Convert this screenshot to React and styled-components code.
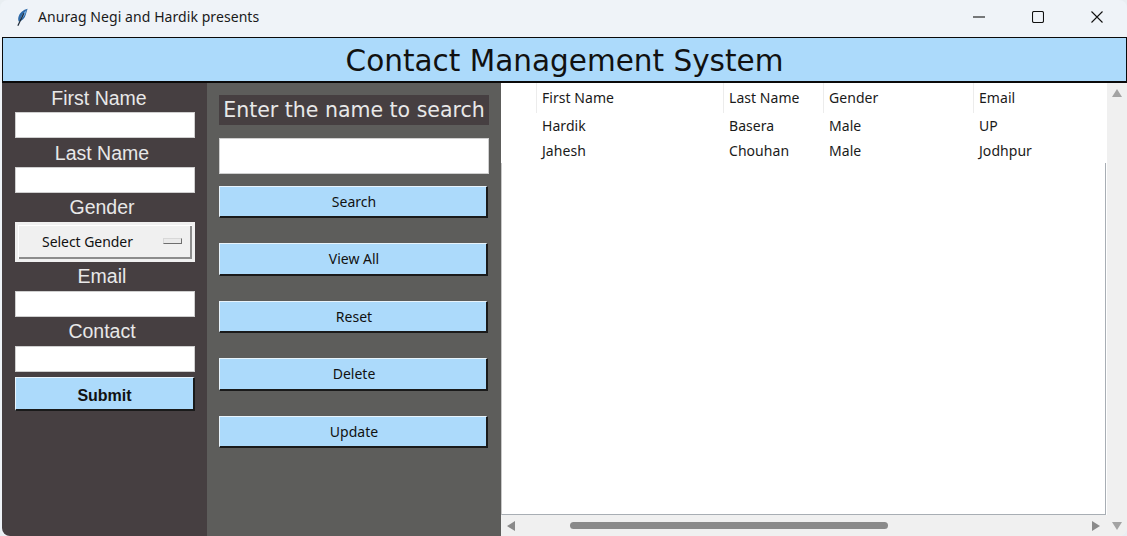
import React from 'react';
import styled, { createGlobalStyle } from 'styled-components';

const GlobalStyle = createGlobalStyle`
  html, body {
    margin: 0;
    padding: 0;
    background: #e9eef2;
    overflow: hidden;
  }
  * {
    box-sizing: border-box;
  }
`;

const COLUMNS = [
  { label: 'First Name', width: 187 },
  { label: 'Last Name', width: 100 },
  { label: 'Gender', width: 150 },
  { label: 'Email', width: 133 },
];

const ROWS = [
  ['Hardik', 'Basera', 'Male', 'UP'],
  ['Jahesh', 'Chouhan', 'Male', 'Jodhpur'],
];

const ACTIONS = ['Search', 'View All', 'Reset', 'Delete', 'Update'];

const Feather = () => (
  <svg width="13" height="19" viewBox="0 0 14 20">
    <path d="M12.500 .5C8 1.500 3.500 5 2.500 10c-.4 2 0 3.500.7 4.500 3.300-.8 6.300-3.800 7.300-7.500.6-2.300 1.300-4.500 2-6.500z" fill="#2f6aa8" />
    <path d="M11.500 2C8.500 4.500 5.500 8 4.500 12.500c2.500-1.500 4.500-4 5.500-6.500.5-1.300 1-2.700 1.500-4z" fill="#7ab2e6" />
    <path d="M8.500 5.500 2 19" stroke="#1c2836" strokeWidth="1.300" fill="none" />
  </svg>
);

const Minimize = () => (
  <svg width="12" height="12" viewBox="0 0 12 12">
    <path d="M0 6h12" stroke="#111" strokeWidth="1.100" />
  </svg>
);

const Maximize = () => (
  <svg width="12" height="12" viewBox="0 0 12 12">
    <rect x=".5" y=".5" width="11" height="11" rx="1.500" fill="none" stroke="#111" strokeWidth="1.100" />
  </svg>
);

const Close = () => (
  <svg width="12" height="12" viewBox="0 0 12 12">
    <path d="M.5.5l11 11M11.500.5l-11 11" stroke="#111" strokeWidth="1.100" />
  </svg>
);

const ARROWS = {
  up: { w: 10, h: 8, points: '5,0 10,8 0,8', fill: '#a3a3a3' },
  down: { w: 10, h: 8, points: '0,0 10,0 5,8', fill: '#a3a3a3' },
  left: { w: 8, h: 10, points: '8,0 8,10 0,5', fill: '#8a8a8a' },
  right: { w: 8, h: 10, points: '0,0 0,10 8,5', fill: '#8a8a8a' },
};

const Arrow = ({ dir }) => {
  const { w, h, points, fill } = ARROWS[dir];
  return (
    <svg width={w} height={h} viewBox={`0 0 ${w} ${h}`}>
      <polygon points={points} fill={fill} />
    </svg>
  );
};

export default function App() {
  return (
    <Page>
      <GlobalStyle />
      <TitleBar>
        <Feather />
        <WindowTitle>Anurag Negi and Hardik presents</WindowTitle>
        <WindowControls>
          <WindowButton><Minimize /></WindowButton>
          <WindowButton><Maximize /></WindowButton>
          <WindowButton><Close /></WindowButton>
        </WindowControls>
      </TitleBar>
      <Banner>Contact Management System</Banner>
      <Main>
        <FormPanel>
          <FieldLabel $shift={12} $low>First Name</FieldLabel>
          <TextBox />
          <FieldLabel $low>Last Name</FieldLabel>
          <TextBox />
          <FieldLabel>Gender</FieldLabel>
          <GenderMenu>
            <span>Select Gender</span>
            <MenuIndicator />
          </GenderMenu>
          <FieldLabel>Email</FieldLabel>
          <TextBox />
          <FieldLabel>Contact</FieldLabel>
          <TextBox />
          <SubmitButton>Submit</SubmitButton>
        </FormPanel>
        <SearchPanel>
          <SearchLabel>Enter the name to search</SearchLabel>
          <SearchBox />
          <ActionList>
            {ACTIONS.map((action) => (
              <ActionButton key={action}>{action}</ActionButton>
            ))}
          </ActionList>
        </SearchPanel>
        <TablePanel>
          <TableArea>
            <TableRow $head>
              <Spacer />
              {COLUMNS.map((column) => (
                <HeadCell key={column.label} $width={column.width}>{column.label}</HeadCell>
              ))}
            </TableRow>
            {ROWS.map((row) => (
              <TableRow key={row[0]}>
                <Spacer />
                {row.map((value, i) => (
                  <Cell key={COLUMNS[i].label} $width={COLUMNS[i].width}>{value}</Cell>
                ))}
              </TableRow>
            ))}
            <TableFrame />
          </TableArea>
          <HorizontalBar>
            <Arrow dir="left" />
            <HorizontalTrack>
              <HorizontalThumb />
            </HorizontalTrack>
            <Arrow dir="right" />
          </HorizontalBar>
        </TablePanel>
        <VerticalBar>
          <Arrow dir="up" />
          <Arrow dir="down" />
        </VerticalBar>
      </Main>
    </Page>
  );
}

const Page = styled.div`
  width: 1127px;
  height: 536px;
  display: flex;
  flex-direction: column;
  overflow: hidden;
  background: #eff3f8;
  border-radius: 8px;
`;

const TitleBar = styled.div`
  height: 37px;
  padding: 0 0 3px 16px;
  display: flex;
  align-items: center;
  flex: none;
`;

const WindowTitle = styled.div`
  margin: 0 0 2px 9px;
  font: 400 14px "Noto Sans", sans-serif;
  letter-spacing: 0.07px;
  color: #1a1a1a;
`;

const WindowControls = styled.div`
  margin-left: auto;
  padding-right: 1px;
  display: flex;
`;

const WindowButton = styled.div`
  width: 59px;
  height: 34px;
  display: flex;
  align-items: center;
  justify-content: center;
`;

const Banner = styled.div`
  flex: none;
  height: 46px;
  margin-left: 2px;
  border: 1px solid #0a0a0a;
  border-bottom-width: 2px;
  background: #acdafb;
  color: #111;
  font: 400 29.500px "DejaVu Sans", sans-serif;
  line-height: 46px;
  text-align: center;
  white-space: nowrap;
`;

const Main = styled.div`
  flex: 1;
  min-height: 0;
  display: flex;
  margin-left: 2px;
`;

const FormPanel = styled.div`
  width: 205px;
  flex: none;
  background: #463f41;
  padding: 0 12px 0 13px;
  border-bottom-left-radius: 8px;
  display: flex;
  flex-direction: column;
`;

const FieldLabel = styled.div`
  height: 29px;
  padding-right: ${({ $shift }) => $shift || 6}px;
  color: #e8e8e8;
  font: 400 19.500px/${({ $low }) => ($low ? 31 : 29)}px "Liberation Sans", sans-serif;
  text-align: center;
`;

const TextBox = styled.div`
  height: 26px;
  background: #fff;
  border: 1px solid #cfcfcf;
`;

const GenderMenu = styled.div`
  height: 40px;
  padding: 0 10px 2px 24px;
  display: flex;
  align-items: center;
  justify-content: space-between;
  background: #f0f0f0;
  border: 3px solid #f0f0f0;
  box-shadow: inset 1px 1px 0 #fff, inset -2px -2px 0 #8c8c8c;
  color: #111;
  font: 400 14px "Noto Sans", sans-serif;
  letter-spacing: -0.05px;
`;

const MenuIndicator = styled.div`
  width: 19px;
  height: 6px;
  background: #eaeaea;
  border: 1px solid #d8d8d8;
  border-right-color: #6e6e6e;
  border-bottom-color: #6e6e6e;
`;

const SubmitButton = styled.div`
  height: 34px;
  margin-top: 5px;
  padding-top: 2px;
  background: #acdafb;
  border: 1px solid #e8f4fc;
  border-right: 2px solid #1a1a1a;
  border-bottom: 2px solid #1a1a1a;
  color: #111;
  font: 700 16px/31px "Liberation Sans", sans-serif;
  text-align: center;
`;

const SearchPanel = styled.div`
  width: 294px;
  flex: none;
  background: #5d5d5b;
  padding: 12px 12px 0;
  display: flex;
  flex-direction: column;
`;

const SearchLabel = styled.div`
  height: 30px;
  background: #463f41;
  color: #e8e8e8;
  font: 400 20.500px/31px "DejaVu Sans", sans-serif;
  text-align: center;
  white-space: nowrap;
  overflow: hidden;
`;

const SearchBox = styled.div`
  height: 36px;
  margin-top: 13px;
  background: #fff;
  border: 1px solid #cfcfcf;
`;

const ActionList = styled.div`
  margin-top: 12px;
  display: flex;
  flex-direction: column;
  gap: 25px;
`;

const ActionButton = styled.div`
  height: 32.450px;
  margin-right: 1px;
  padding-left: 2px;
  background: #acdafb;
  border: 1px solid #e8f4fc;
  border-right: 2px solid #1a1a1a;
  border-bottom: 2px solid #1a1a1a;
  color: #111;
  font: 400 14px/29px "Noto Sans", sans-serif;
  text-align: center;
`;

const TablePanel = styled.div`
  width: 606px;
  flex: none;
  display: flex;
  flex-direction: column;
  background: #f0f0f0;
`;

const TableArea = styled.div`
  position: relative;
  height: 432px;
  flex: none;
  background: #fff;
`;

const TableFrame = styled.div`
  position: absolute;
  left: 0;
  right: 1px;
  top: 80px;
  bottom: 0;
  border: 1px solid #a8aeb4;
  border-top: none;
  border-left-color: #c8c8c8;
  pointer-events: none;
`;

const TableRow = styled.div`
  display: flex;
  height: ${({ $head }) => ($head ? '30px' : '25px')};
  color: #1a1a1a;
  font: 400 14px "Noto Sans", sans-serif;
  letter-spacing: 0.05px;
`;

const Spacer = styled.div`
  width: 35px;
  flex: none;
`;

const Cell = styled.div`
  width: ${({ $width }) => $width}px;
  flex: none;
  padding-left: 6px;
  line-height: 25px;
`;

const HeadCell = styled(Cell)`
  line-height: 30px;
  border-left: 1px solid #ececec;
  padding-left: 5px;
`;

const HorizontalBar = styled.div`
  flex: 1;
  display: flex;
  align-items: center;
  padding: 0 7px 0 6px;
`;

const HorizontalTrack = styled.div`
  flex: 1;
  height: 7px;
  padding-left: 55px;
`;

const HorizontalThumb = styled.div`
  width: 318px;
  height: 7px;
  border-radius: 4px;
  background: #8a8a8a;
`;

const VerticalBar = styled.div`
  flex: 1;
  background: #f0f0f0;
  border-bottom-right-radius: 8px;
  display: flex;
  flex-direction: column;
  align-items: center;
  justify-content: space-between;
  padding: 6px 0 6px;
`;
